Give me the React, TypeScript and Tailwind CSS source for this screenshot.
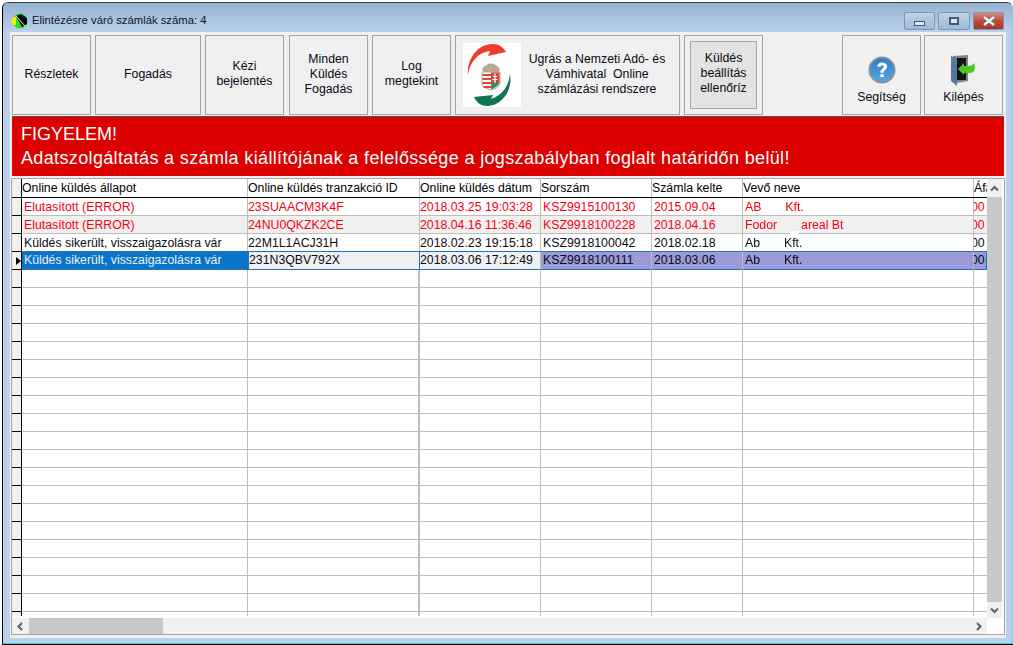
import React from 'react';

const FONT = "font-['Liberation_Sans',Arial,sans-serif]";

const columnWidths = 'grid-cols-[10px_226px_172px_121px_111px_91px_231px_13px]';

const rows = [
  { status: 'Elutasított (ERROR)', id: '23SUAACM3K4F', date: '2018.03.25 19:03:28', no: 'KSZ9915100130', issued: '2015.09.04', buyer: 'AB       Kft.', red: true },
  { status: 'Elutasított (ERROR)', id: '24NU0QKZK2CE', date: '2018.04.16 11:36:46', no: 'KSZ9918100228', issued: '2018.04.16', buyer: 'Fodor       areal Bt', red: true, shaded: true, blot: true },
  { status: 'Küldés sikerült, visszaigazolásra vár', id: '22M1L1ACJ31H', date: '2018.02.23 19:15:18', no: 'KSZ9918100042', issued: '2018.02.18', buyer: 'Ab       Kft.', blot: true },
  { status: 'Küldés sikerült, visszaigazolásra vár', id: '231N3QBV792X', date: '2018.03.06 17:12:49', no: 'KSZ9918100111', issued: '2018.03.06', buyer: 'Ab       Kft.', selected: true },
];

const emptyRows = Array.from({ length: 20 }, (_, i) => i);

function ToolButton({ children, className = '' }: { children: React.ReactNode; className?: string }) {
  return (
    <div className={`h-[80px] shrink-0 border border-[#a5a5a5] bg-[#f0f0f0] flex flex-col items-center justify-center text-center text-[12.3px] leading-[15px] text-[#0a0a14] ${className}`}>
      {children}
    </div>
  );
}

function AppIcon() {
  return (
    <svg width="16" height="16" viewBox="0 0 16 16" className="shrink-0">
      <circle cx="8" cy="8" r="7.5" fill="#23e023" />
      <path d="M1 4 A7.5 7.5 0 0 0 1 12 L4 12 L4 4 Z" fill="#f5f000" />
      <path d="M4 3 L9 1 L15 5 L15 11 L10 14 Z" fill="#0a0a0a" />
      <path d="M4 3 L13 13" stroke="#f0f0f0" strokeWidth="1" />
    </svg>
  );
}

function NavLogo() {
  return (
    <svg width="58" height="64" viewBox="0 0 58 64" className="shrink-0 bg-white">
      <path d="M5 32 C4 16 14 1 30 1 C36 1 40 4 43 9 L25 13 L27 8 C16 9 7 18 5 32 Z" fill="#ef3b2d" />
      <path d="M47 31 C50 48 38 63 24 63 C18 63 13 59 11 54 L30 52 L28 56 C40 52 46 42 47 31 Z" fill="#0f7355" />
      <g transform="translate(-1 0)">
        <path d="M20 26 Q29 15 38 26 L37 29 L21 29 Z" fill="#b7a98d" />
        <path d="M20 29 H38 V40 Q38 45 29 47 Q20 45 20 40 Z" fill="#fff" stroke="#b7a98d" strokeWidth="1" />
        <path d="M20.5 31 H29 V33 H20.5 Z M20.5 35 H29 V37 H20.5 Z M20.5 39 H29 V41 H20.5 Z M21.5 43 H29 V45 H21.5 Z" fill="#e0473a" />
        <path d="M29 29.5 H37.5 V39 H29 Z" fill="#dd4438" />
        <path d="M29 39 H37.5 Q37 44 29 46.5 Z" fill="#3f8a62" />
        <path d="M33 30.5 V40 M31 33.5 H35 M30.5 36.5 H35.5" stroke="#fff" strokeWidth="1.2" />
      </g>
    </svg>
  );
}

function HelpIcon() {
  return (
    <svg width="28" height="28" viewBox="0 0 30 30">
      <defs>
        <linearGradient id="helpFill" x1="0" y1="0" x2="0" y2="1">
          <stop offset="0" stopColor="#2f7dc4" />
          <stop offset="1" stopColor="#5aa5e0" />
        </linearGradient>
      </defs>
      <circle cx="15" cy="15" r="13.5" fill="url(#helpFill)" stroke="#8a939c" strokeWidth="2" />
      <path d="M10 11.5 C10 8.5 12.5 7 15 7 C18.5 7 20.5 9 20.5 11.3 C20.5 14.5 16.8 14.8 16.8 18 H13.3 C13.3 13.8 16.8 13.5 16.8 11.5 C16.8 10.5 16 10 15 10 C14 10 13.5 10.6 13.5 11.5 Z" fill="#fff" />
      <rect x="13.3" y="19.5" width="3.5" height="3.2" fill="#fff" />
    </svg>
  );
}

function ExitIcon() {
  return (
    <svg width="26" height="34" viewBox="0 0 26 34">
      <path d="M2 2 L17 1 V27 L6 29 L2 27 Z" fill="#7c8488" />
      <rect x="6" y="4" width="9" height="22" fill="#141414" />
      <path d="M0 2 L6 5 V32 L0 27 Z" fill="#55799c" />
      <path d="M7 15 L13 9 V12 H18 C20 12 22 11 23 9 C25 13 24 19 19 19 H13 V21 Z" fill="#49c820" />
    </svg>
  );
}

function WindowButton({ className, children }: { className: string; children: React.ReactNode }) {
  return <div className={`h-[18px] rounded-[2px] border border-[#7d97b5] flex items-center justify-center ${className}`}>{children}</div>;
}

function HeaderRow() {
  const labels = ['Online küldés állapot', 'Online küldés tranzakció ID', 'Online küldés dátum', 'Sorszám', 'Számla kelte', 'Vevő neve', 'Áfa'];
  return (
    <div className={`grid ${columnWidths} h-[19px] shrink-0 border-b border-black bg-white`}>
      <div className="bg-[#f0f0f0] border-r border-black" />
      {labels.map((label) => (
        <div key={label} className="border-r border-[#bdbdbd] last:border-r-0 pt-[1px] leading-[17px] overflow-hidden whitespace-nowrap text-black">
          {label}
        </div>
      ))}
    </div>
  );
}

function DataRow({ row }: { row: (typeof rows)[number] }) {
  const color = row.red ? 'text-[#f80012]' : 'text-[#0a0a14]';
  const rowBg = row.shaded ? 'bg-[#f0f0f0]' : 'bg-white';
  const cell = 'border-r border-[#bdbdbd] pt-[1px] leading-[16px] overflow-hidden whitespace-pre';
  const picked = 'border-y border-y-[#1f70c1] pt-[1px] leading-[15px] whitespace-pre overflow-hidden';

  if (row.selected) {
    return (
      <div className={`grid ${columnWidths} h-[19px] shrink-0 -mt-[1px] relative z-10 text-[#0a0a14]`}>
        <div className="bg-[#f0f0f0] border-r border-black border-y border-y-black flex items-center">
          <span className="ml-[4px] w-0 h-0 border-y-[4px] border-y-transparent border-l-[5px] border-l-black" />
        </div>
        <div className={`${picked} bg-[#0a74c9] text-[#e8f2fb] pl-[2px]`}>{row.status}</div>
        <div className="bg-[#f0f0f0] border border-[#1f70c1] pt-[1px] leading-[15px] whitespace-pre">{row.id}</div>
        <div className={`${picked} bg-[#f0f0f0] border-r border-r-[#bdbdbd]`}>{row.date}</div>
        <div className={`${picked} bg-[#9b9bd8] pl-[2px] border-r border-r-[#bdbdbd]`}>{row.no}</div>
        <div className={`${picked} bg-[#9b9bd8] pl-[2px] border-r border-r-[#bdbdbd]`}>{row.issued}</div>
        <div className={`${picked} bg-[#9b9bd8] pl-[2px] border-r border-r-[#bdbdbd]`}><span className="blur-[0.4px]">{row.buyer}</span></div>
        <div className={`${picked} bg-[#9b9bd8] border-r border-r-[#1f70c1]`}><span className="-ml-[3px]">00</span></div>
      </div>
    );
  }

  return (
    <div className={`grid ${columnWidths} h-[18px] shrink-0 relative border-b border-[#bdbdbd] ${rowBg} ${color}`}>
      <div className="bg-[#f0f0f0] border-r border-black border-b border-b-black -mb-[1px]" />
      <div className={`${cell} pl-[2px]`}>{row.status}</div>
      <div className={cell}>{row.id}</div>
      <div className={cell}>{row.date}</div>
      <div className={`${cell} pl-[2px]`}>{row.no}</div>
      <div className={`${cell} pl-[2px]`}>{row.issued}</div>
      <div className={`${cell} pl-[2px]`}><span className="blur-[0.4px]">{row.buyer}</span></div>
      <div className="pt-[1px] leading-[16px] overflow-hidden whitespace-pre"><span className="-ml-[3px]">00</span></div>
      {row.blot && <span className={`absolute -bottom-[2px] h-[4px] w-[9px] bg-white rounded-sm ${row.shaded ? 'left-[778px]' : 'left-[750px]'}`} />}
    </div>
  );
}

function EmptyRow() {
  return (
    <div className={`grid ${columnWidths} h-[18px] shrink-0 border-b border-[#bdbdbd] bg-white`}>
      <div className="bg-[#f0f0f0] border-r border-black border-b border-b-black -mb-[1px]" />
      <div className="border-r border-[#bdbdbd]" />
      <div className="border-r-2 border-[#bdbdbd]" />
      <div className="border-r border-[#bdbdbd]" />
      <div className="border-r border-[#bdbdbd]" />
      <div className="border-r border-[#bdbdbd]" />
      <div className="border-r border-[#bdbdbd]" />
      <div />
    </div>
  );
}

export default function App() {
  return (
    <div className={`${FONT} w-[1013px] h-[645px] overflow-hidden bg-white text-[12.3px] pl-[2px] pt-[2px]`}>
      <div className="w-[1011px] h-[643px] border-b border-black">
        <div className="h-full flex flex-col rounded-t-[6px] border-l border-l-black border-t border-t-[#3a3a3a] border-r border-r-[#8fc4e8] border-b border-b-[#2fd0ea] bg-[#b9d1ea]">
          {/* Title bar */}
          <div className="h-[29px] shrink-0 flex items-center pt-[6px] pl-[9px] pr-[2px] rounded-t-[6px] bg-gradient-to-b from-[#97b2d1] to-[#b9d1ea]">
            <AppIcon />
            <span className="ml-[4px] text-[#14141e] text-[11.3px]">Elintézésre váró számlák száma: 4</span>
            <div className="ml-auto flex gap-[3px] mt-[1px] mr-[6px]">
              <WindowButton className="w-[31px] bg-gradient-to-b from-[#c0d3e6] to-[#9fb9d5]">
                <span className="w-[11px] h-[5px] mt-[4px] border border-[#4a5a6c] bg-[#dfe6ee]" />
              </WindowButton>
              <WindowButton className="w-[32px] bg-gradient-to-b from-[#c0d3e6] to-[#9fb9d5]">
                <span className="w-[10px] h-[8px] border-2 border-[#4a5a6c] bg-[#dfe6ee]" />
              </WindowButton>
              <WindowButton className="w-[31px] border-[#7d3f45] bg-gradient-to-b from-[#d98a7c] via-[#c0493a] to-[#a93528]">
                <svg width="14" height="10" viewBox="0 0 14 10">
                  <path d="M2 1 L12 9 M12 1 L2 9" stroke="#5a6470" strokeWidth="3.6" />
                  <path d="M2 1 L12 9 M12 1 L2 9" stroke="#f2f2f2" strokeWidth="2.4" />
                </svg>
              </WindowButton>
            </div>
          </div>

          {/* Client area */}
          <div className="flex-1 min-h-0 ml-[7px] mr-[6px] mb-[5px] bg-[#f0f0f0] flex flex-col pb-[3px]">
            <div className="flex pt-[3px] pl-[2px] pr-[2px] h-[84px] shrink-0 gap-[4px]">
              <ToolButton className="w-[79px] pb-[1px]">Részletek</ToolButton>
              <ToolButton className="w-[106px] pb-[1px]">Fogadás</ToolButton>
              <ToolButton className="w-[79px] pb-[2px]">Kézi<br />bejelentés</ToolButton>
              <ToolButton className="w-[79px] ml-[1px] pb-[2px]">Minden<br />Küldés<br />Fogadás</ToolButton>
              <ToolButton className="w-[79px] pb-[2px]">Log<br />megtekint</ToolButton>
              <ToolButton className="w-[225px] !flex-row justify-start pl-[7px]">
                <NavLogo />
                <span className="w-[150px] ml-[1px] -mt-[2px]">Ugrás a Nemzeti Adó- és<br />Vámhivatal&nbsp; Online<br />számlázási rendszere</span>
              </ToolButton>
              <ToolButton className="w-[79px] p-[5px]">
                <div className="w-full h-full border border-[#a5a5a5] bg-[#e3e3e3] flex items-center justify-center pb-[4px]">
                  <span>Küldés<br />beállítás<br />ellenőríz</span>
                </div>
              </ToolButton>
              <div className="w-[71px] shrink-0" />
              <ToolButton className="w-[79px] !justify-end pb-[9px] gap-[6px]">
                <HelpIcon />
                Segítség
              </ToolButton>
              <ToolButton className="w-[79px] -ml-[1px] !justify-end pb-[9px] gap-[2px]">
                <ExitIcon />
                Kilépés
              </ToolButton>
            </div>

            {/* Warning banner */}
            <div className="ml-[2px] mr-[2px] h-[60px] shrink-0 border-t border-[#555] bg-[#dd0000] text-white text-[18px] leading-[24px] pl-[9px] pt-[5px] whitespace-nowrap">
              FIGYELEM!
              <br />
              <span className="tracking-[0.355px]">Adatszolgáltatás a számla kiállítójának a felelőssége a jogszabályban foglalt határidőn belül!</span>
            </div>

            {/* Data grid */}
            <div className="mt-[2px] ml-[1px] mr-[1px] flex-1 min-h-0 border border-[#a5a5a5] bg-white flex flex-col overflow-hidden">
              <div className="flex-1 min-h-0 flex overflow-hidden">
                <div className="w-[975px] h-[437px] shrink-0 overflow-hidden flex flex-col">
                  <HeaderRow />
                  {rows.map((row) => (
                    <DataRow key={row.no} row={row} />
                  ))}
                  {emptyRows.map((i) => (
                    <EmptyRow key={i} />
                  ))}
                </div>
                <div className="w-[15px] shrink-0 bg-[#f0f0f0] flex flex-col">
                  <div className="h-[18px] shrink-0 flex items-center justify-center">
                    <svg width="9" height="7" viewBox="0 0 9 7"><path d="M1 5.5 L4.5 2 L8 5.5" stroke="#606060" strokeWidth="2" fill="none" /></svg>
                  </div>
                  <div className="flex-1 bg-[#c8c8c8]" />
                  <div className="h-[16px] shrink-0 flex items-center justify-center">
                    <svg width="9" height="7" viewBox="0 0 9 7"><path d="M1 1.5 L4.5 5 L8 1.5" stroke="#606060" strokeWidth="2" fill="none" /></svg>
                  </div>
                </div>
              </div>
              <div className="h-[16px] shrink-0 flex">
                <div className="w-[975px] bg-[#f0f0f0] flex items-center">
                  <svg width="17" height="9" viewBox="0 0 17 9"><path d="M10 1 L6.5 4.5 L10 8" stroke="#606060" strokeWidth="2" fill="none" /></svg>
                  <div className="w-[134px] h-full bg-[#c8c8c8]" />
                  <svg width="9" height="9" viewBox="0 0 9 9" className="ml-auto mr-[3px]"><path d="M2 1 L5.5 4.5 L2 8" stroke="#606060" strokeWidth="2" fill="none" /></svg>
                </div>
                <div className="flex-1 bg-white" />
              </div>
            </div>
          </div>
        </div>
      </div>
    </div>
  );
}
